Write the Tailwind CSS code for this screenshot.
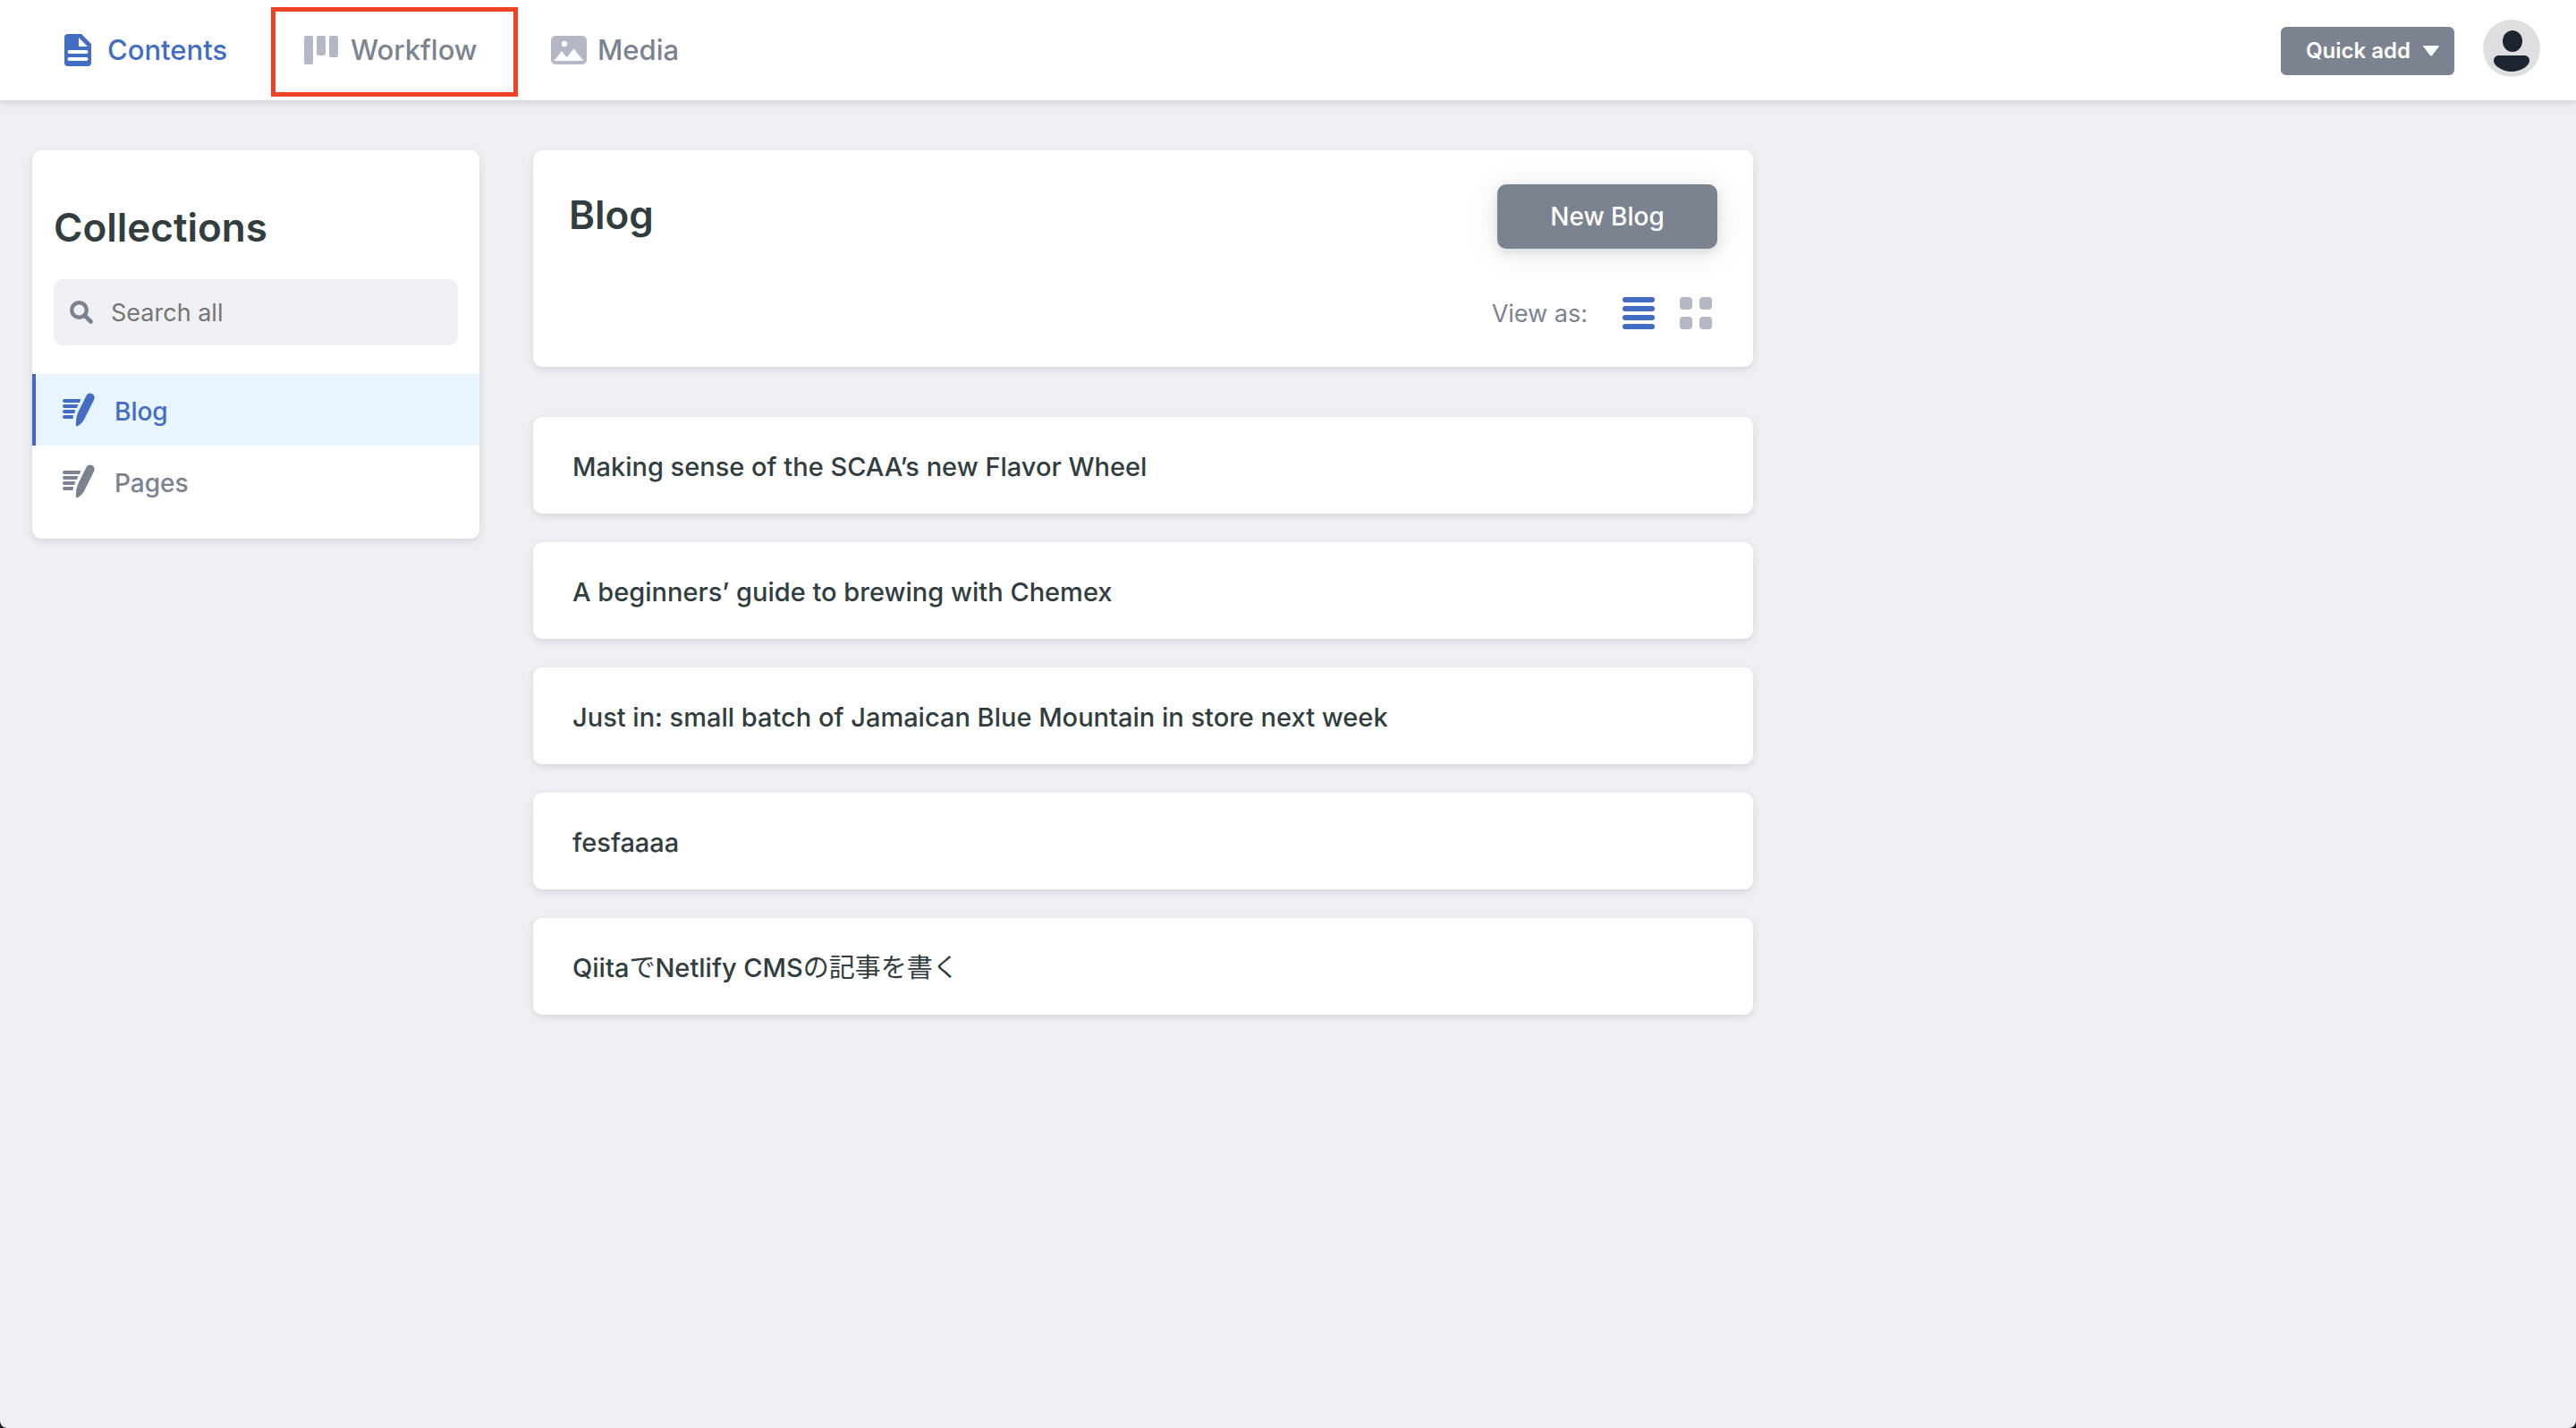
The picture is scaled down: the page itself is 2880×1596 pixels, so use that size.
<!doctype html>
<html lang="en" class="bg-[#1c1e26]">
  <head>
    <title>Content Manager</title>
    <meta charset="UTF-8" />
    <meta name="viewport" content="width=device-width, initial-scale=1.0" />
    <script src="https://cdn.jsdelivr.net/npm/@tailwindcss/browser@4"></script>
  </head>
  <body class="font-[Inter,'Noto_Sans_CJK_JP',sans-serif]">
    <div class="min-h-screen rounded-b-lg bg-[#eff0f4] text-[#313d3e]">
      <header class="flex h-28 items-center justify-between bg-white pr-10 pl-9 shadow-[0_4px_12px_rgba(68,74,87,0.08),0_2px_6px_rgba(68,74,87,0.12)]">
        <nav class="flex items-center pt-1 text-[31px] font-medium text-[#7b8290]">
          <a href="#contents" class="flex h-[100px] w-[267px] items-center gap-[18px] pb-1 pl-9 text-[#426dc3]">
            <svg class="h-9 w-[30px]" viewBox="0 0 30 36" fill="currentColor">
              <path fill-rule="evenodd" d="M4 0h15l11 11v21a4 4 0 0 1-4 4H4a4 4 0 0 1-4-4V4a4 4 0 0 1 4-4zM16 4v10h10zM5.500 18a1.700 1.700 0 0 0 0 4h19a1.700 1.700 0 0 0 0-4zM5.500 26a1.700 1.700 0 0 0 0 4h19a1.700 1.700 0 0 0 0-4z" />
            </svg>
            Contents
          </a>
          <a href="#workflow" class="flex h-[100px] w-[276px] items-center gap-[14px] border-5 border-[#ef4123] pb-1 pl-8">
            <svg class="h-8 w-[38px] text-[#b3b8c4]" viewBox="0 0 38 32" fill="currentColor">
              <rect width="10" height="32" rx="2" />
              <rect x="14" width="10" height="22" rx="2" />
              <rect x="28" width="10" height="24" rx="2" />
            </svg>
            Workflow
          </a>
          <a href="#media" class="flex h-[100px] items-center gap-3 pb-1 pl-[37px]">
            <svg class="h-8 w-10 text-[#b3b8c4]" viewBox="0 0 40 32" fill="currentColor">
              <path fill-rule="evenodd" d="M5 0h30a5 5 0 0 1 5 5v22a5 5 0 0 1-5 5H5a5 5 0 0 1-5-5V5a5 5 0 0 1 5-5zM15 5.800a3.200 3.200 0 1 0 0 6.400a3.200 3.200 0 1 0 0-6.400zM3.500 28h33L25.500 14.500 17.500 24 12 17z" />
            </svg>
            Media
          </a>
        </nav>
        <div class="flex items-center gap-8">
          <button class="mt-[2px] flex h-[54px] items-center gap-[14px] rounded-md bg-[#7b8290] pr-[17px] pl-7 text-2xl font-semibold text-white">
            Quick add
            <svg class="h-3 w-[18px]" viewBox="0 0 18 12" fill="currentColor">
              <path d="M1 0h16q1.500 0 .6 1.300L10 11q-1 1.300-2 0L.4 1.300Q-.5 0 1 0z" />
            </svg>
          </button>
          <button aria-label="Account" class="mb-1 size-16 overflow-hidden rounded-full bg-[#dfdfe1]">
            <svg class="size-16" viewBox="0 0 64 64" fill="#1e2532">
              <ellipse cx="33" cy="24" rx="11" ry="12" />
              <path d="M18 40h28c4 0 6 2.500 6 6 0 5-9 12-20 12s-20-7-20-12c0-3.500 2-6 6-6z" />
            </svg>
          </button>
        </div>
      </header>

      <main class="flex items-start gap-[60px] px-9 pt-14 pb-14">
        <aside class="w-[500px] shrink-0 rounded-[10px] bg-white pb-6 shadow-[0_4px_12px_rgba(68,74,87,0.06),0_2px_6px_rgba(68,74,87,0.10)]">
          <h2 class="px-6 pt-14 text-[44px] leading-[60px] font-semibold">Collections</h2>
          <label class="mx-6 mt-7 flex h-[74px] items-center gap-5 rounded-[10px] bg-[#eff0f4] px-[18px]">
            <svg class="size-[26px] shrink-0 text-[#7b8290]" viewBox="0 0 26 26" fill="none" stroke="currentColor">
              <circle cx="10.500" cy="10.500" r="8.300" stroke-width="4.400" />
              <path d="M17 17l6.500 6.500" stroke-width="4.600" stroke-linecap="round" />
            </svg>
            <input type="search" aria-label="Search all" placeholder="Search all" class="w-full bg-transparent pt-[2px] text-[27px] outline-none placeholder:text-[#757575]" />
          </label>
          <nav class="mt-8 text-[28px] font-medium">
            <a href="#blog" class="flex h-20 items-center gap-[22px] border-l-4 border-[#4766c4] bg-[#e9f5fe] pl-[30px] text-[#426dc3]">
              <svg class="h-[38px] w-9" viewBox="0 0 36 38" fill="currentColor">
                <path d="M2 7h18.300l-1.200 4H2a2 2 0 0 1 0-4zM2 13h15.500l-1.500 4H2a2 2 0 0 1 0-4zM2 19h12.200l-1 4H2a2 2 0 0 1 0-4zM2 25h10.200l-.8 4H2a2 2 0 0 1 0-4z" />
                <path d="M26.500 3.200C28 .3 31 0 33.300 1.300s2.900 3.900 1.700 6.700L24.500 29c-2 4-4.700 6.800-8.300 8.200-1 .3-1.300-.2-1.300-1.200 0-6 .4-10 3-15.500z" />
              </svg>
              <span class="pt-[3px]">Blog</span>
            </a>
            <a href="#pages" class="flex h-20 items-center gap-[22px] border-l-4 border-transparent pl-[30px] text-[#7b8290]">
              <svg class="h-[38px] w-9" viewBox="0 0 36 38" fill="currentColor">
                <path d="M2 7h18.300l-1.200 4H2a2 2 0 0 1 0-4zM2 13h15.500l-1.500 4H2a2 2 0 0 1 0-4zM2 19h12.200l-1 4H2a2 2 0 0 1 0-4zM2 25h10.200l-.8 4H2a2 2 0 0 1 0-4z" />
                <path d="M26.500 3.200C28 .3 31 0 33.300 1.300s2.900 3.900 1.700 6.700L24.500 29c-2 4-4.700 6.800-8.300 8.200-1 .3-1.300-.2-1.300-1.200 0-6 .4-10 3-15.500z" />
              </svg>
              <span class="pt-[3px]">Pages</span>
            </a>
          </nav>
        </aside>

        <section class="w-full max-w-[1364px]">
          <div class="rounded-[10px] bg-white px-10 pt-[38px] pb-8 shadow-[0_4px_12px_rgba(68,74,87,0.06),0_2px_6px_rgba(68,74,87,0.10)]">
            <div class="flex items-start justify-between">
              <h1 class="text-[44px] leading-[68px] font-semibold">Blog</h1>
              <button class="h-[72px] w-[246px] rounded-[10px] bg-[#7b8290] text-[28px] font-medium text-white shadow-[0_4px_12px_rgba(68,74,87,0.15),0_4px_36px_rgba(68,74,87,0.12)]">
                New Blog
              </button>
            </div>
            <div class="mt-11 flex h-14 items-center justify-end gap-7 pr-[6px]">
              <span class="mr-[11px] pt-[3px] text-[27px] text-[#7b8290]">View as:</span>
              <button aria-label="List view" class="text-[#426dc3]">
                <svg class="size-9" viewBox="0 0 36 36" fill="currentColor">
                  <rect width="36" height="6" rx="3" />
                  <rect y="10" width="36" height="6" rx="3" />
                  <rect y="20" width="36" height="6" rx="3" />
                  <rect y="30" width="36" height="6" rx="3" />
                </svg>
              </button>
              <button aria-label="Grid view" class="text-[#b3b8c4]">
                <svg class="size-9" viewBox="0 0 36 36" fill="currentColor">
                  <rect width="14" height="14" rx="4" />
                  <rect x="22" width="14" height="14" rx="4" />
                  <rect y="22" width="14" height="14" rx="4" />
                  <rect x="22" y="22" width="14" height="14" rx="4" />
                </svg>
              </button>
            </div>
          </div>

          <ul class="mt-14 flex flex-col gap-8 text-[29px] font-medium">
            <li>
              <a href="#flavor-wheel" class="flex h-[108px] items-center rounded-[10px] bg-white px-11 pt-[3px] shadow-[0_4px_12px_rgba(68,74,87,0.06),0_2px_6px_rgba(68,74,87,0.10)]">Making sense of the SCAA’s new Flavor Wheel</a>
            </li>
            <li>
              <a href="#chemex" class="flex h-[108px] items-center rounded-[10px] bg-white px-11 pt-[3px] shadow-[0_4px_12px_rgba(68,74,87,0.06),0_2px_6px_rgba(68,74,87,0.10)]">A beginners’ guide to brewing with Chemex</a>
            </li>
            <li>
              <a href="#blue-mountain" class="flex h-[108px] items-center rounded-[10px] bg-white px-11 pt-[3px] shadow-[0_4px_12px_rgba(68,74,87,0.06),0_2px_6px_rgba(68,74,87,0.10)]">Just in: small batch of Jamaican Blue Mountain in store next week</a>
            </li>
            <li>
              <a href="#fesfaaaa" class="flex h-[108px] items-center rounded-[10px] bg-white px-11 pt-[3px] shadow-[0_4px_12px_rgba(68,74,87,0.06),0_2px_6px_rgba(68,74,87,0.10)]">fesfaaaa</a>
            </li>
            <li>
              <a href="#qiita" lang="ja" class="flex h-[108px] items-center rounded-[10px] bg-white px-11 pt-[3px] shadow-[0_4px_12px_rgba(68,74,87,0.06),0_2px_6px_rgba(68,74,87,0.10)]">Qiita<span class="font-normal">で</span>Netlify CMS<span class="font-normal">の記事を書く</span></a>
            </li>
          </ul>
        </section>
      </main>
    </div>
  </body>
</html>
